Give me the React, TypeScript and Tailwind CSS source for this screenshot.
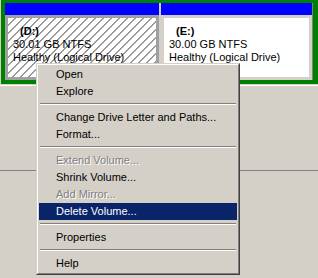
const hatch =
  "bg-[repeating-linear-gradient(135deg,#ffffff_0px,#ffffff_4.4px,#9a9a9a_4.4px,#9a9a9a_5.657px)]";

type Item =
  | { kind: "item"; label: string; disabled?: boolean; active?: boolean }
  | { kind: "sep" };

const items: Item[] = [
  { kind: "item", label: "Open" },
  { kind: "item", label: "Explore" },
  { kind: "sep" },
  { kind: "item", label: "Change Drive Letter and Paths..." },
  { kind: "item", label: "Format..." },
  { kind: "sep" },
  { kind: "item", label: "Extend Volume...", disabled: true },
  { kind: "item", label: "Shrink Volume..." },
  { kind: "item", label: "Add Mirror...", disabled: true },
  { kind: "item", label: "Delete Volume...", active: true },
  { kind: "sep" },
  { kind: "item", label: "Properties" },
  { kind: "sep" },
  { kind: "item", label: "Help" },
];

function Partition({
  letter,
  size,
  selected,
  className,
}: {
  letter: string;
  size: string;
  selected?: boolean;
  className?: string;
}) {
  return (
    <div className={"flex flex-col bg-[#d4d0c8] " + (className ?? "")}>
      <div className="h-[12px] bg-[#0000ff]" />
      <div
        className={
          "flex-1 flex p-[3px] " + (selected ? "bg-[#a0a0a0]" : "bg-[#d4d0c8]")
        }
      >
        <div
          className={
            "flex-1 flex flex-col pl-[5px] pt-[7px] leading-[13px] " +
            (selected ? hatch : "bg-white")
          }
        >
          <div className="pl-[7px] font-bold">({letter}:)</div>
          <div>{size} GB NTFS</div>
          <div>Healthy (Logical Drive)</div>
        </div>
      </div>
    </div>
  );
}

export default function App() {
  return (
    <div className="relative w-[318px] h-[278px] overflow-hidden bg-[#d4d0c8] text-[11px] text-black font-['Liberation_Sans',Arial,sans-serif]">
      <div className="h-[85px] pl-[1px]">
        <div className="flex h-[84px] w-[317px] bg-[#008000] pt-[3px] pb-[4px] pl-[4px] pr-[4px]">
          <Partition letter="D" size="30.01" selected className="w-[155px] pr-[1px]" />
          <Partition letter="E" size="30.00" className="w-[153px] pl-[1px] border-r border-[#808080]" />
        </div>
      </div>
      <div className="h-px bg-white" />
      <div className="mt-[84px] h-px bg-[#808080]" />

      <div className="absolute left-[36px] top-[63px] w-[204px] bg-[#d4d0c8] border border-t-[#d4d0c8] border-l-[#d4d0c8] border-b-[#404040] border-r-[#404040]">
        <div className="border border-t-white border-l-white border-b-[#808080] border-r-[#808080] p-[1px] flex flex-col">
          {items.map((it, i) =>
            it.kind === "sep" ? (
              <div key={i} className="h-[9px] pt-[3px] px-[1px]">
                <div className="h-px bg-[#808080]" />
                <div className="h-px bg-white" />
              </div>
            ) : (
              <div
                key={i}
                className={
                  "h-[17px] flex items-center pl-[17px] whitespace-nowrap " +
                  (it.active
                    ? "bg-[#0a246a] text-white"
                    : it.disabled
                    ? "text-[#808080] [text-shadow:1px_1px_0_#ffffff]"
                    : "text-black")
                }
              >
                {it.label}
              </div>
            )
          )}
        </div>
      </div>
    </div>
  );
}
